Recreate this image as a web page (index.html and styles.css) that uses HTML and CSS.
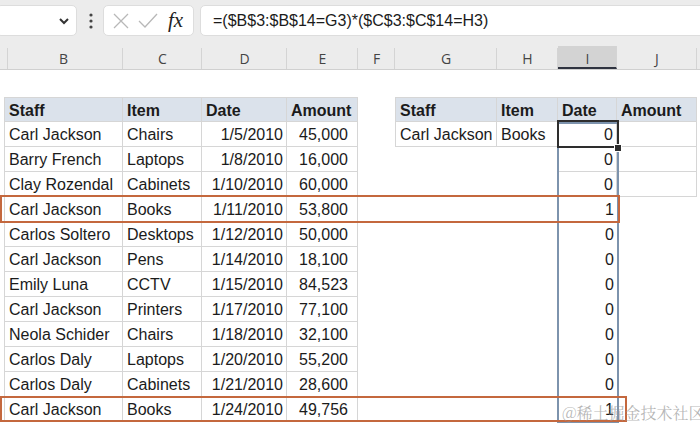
FILE: index.html
```html
<!DOCTYPE html>
<html lang="en">
<head>
    <meta charset="UTF-8" />
    <title>Sheet</title>
    <link rel="stylesheet" href="styles.css">
</head>
<body>
    <div class="app">
        <!-- Formula bar -->
        <div class="toolbar">
            <div class="namebox">
                <svg width="12" height="8" viewBox="0 0 12 8"><polyline points="2,2 6,6 10,2" fill="none" stroke="#333" stroke-width="2"/></svg>
            </div>
            <svg class="grip" width="6" height="20" viewBox="0 0 6 20"><circle cx="3" cy="4" r="1.6"/><circle cx="3" cy="10" r="1.6"/><circle cx="3" cy="16" r="1.6"/></svg>
            <div class="fxbox">
                <svg width="16" height="16" viewBox="0 0 16 16"><path d="M1 1 L15 15 M15 1 L1 15" stroke="#b8b8b8" stroke-width="1.3" fill="none"/></svg>
                <svg width="20" height="16" viewBox="0 0 20 16"><polyline points="1,8 7,14 19,1" stroke="#b8b8b8" stroke-width="1.3" fill="none"/></svg>
                <span class="fx">fx</span>
            </div>
            <div class="formula">=($B$3:$B$14=G3)*($C$3:$C$14=H3)</div>
        </div>

        <!-- Column letters -->
        <div class="row colhead">
            <div></div><div>B</div><div>C</div><div>D</div><div>E</div><div>F</div><div>G</div><div>H</div><div class="sel">I</div><div>J</div><div></div>
        </div>

        <div class="row tall"></div>

        <div class="row">
            <div></div>
            <div class="t hd first top">Staff</div><div class="t hd top">Item</div><div class="t hd top">Date</div><div class="t hd top">Amount</div>
            <div></div>
            <div class="t hd first top">Staff</div><div class="t hd top">Item</div><div class="t hd top">Date</div><div class="t hd top">Amount</div>
            <div></div>
        </div>
        <div class="row">
            <div></div>
            <div class="t first">Carl Jackson</div><div class="t">Chairs</div><div class="t num">1/5/2010</div><div class="t amt">45,000</div>
            <div></div>
            <div class="t first">Carl Jackson</div><div class="t">Books</div><div class="t num">0</div><div class="t"></div>
            <div></div>
        </div>
        <div class="row">
            <div></div>
            <div class="t first">Barry French</div><div class="t">Laptops</div><div class="t num">1/8/2010</div><div class="t amt">16,000</div>
            <div></div><div></div><div></div>
            <div class="t num">0</div><div class="t"></div>
            <div></div>
        </div>
        <div class="row">
            <div></div>
            <div class="t first">Clay Rozendal</div><div class="t">Cabinets</div><div class="t num">1/10/2010</div><div class="t amt">60,000</div>
            <div></div><div></div><div></div>
            <div class="t num">0</div><div class="t"></div>
            <div></div>
        </div>
        <div class="row">
            <div></div>
            <div class="t first">Carl Jackson</div><div class="t">Books</div><div class="t num">1/11/2010</div><div class="t amt">53,800</div>
            <div></div><div></div><div></div>
            <div class="num">1</div><div></div><div></div>
        </div>
        <div class="row">
            <div></div>
            <div class="t first">Carlos Soltero</div><div class="t">Desktops</div><div class="t num">1/12/2010</div><div class="t amt">50,000</div>
            <div></div><div></div><div></div>
            <div class="num">0</div><div></div><div></div>
        </div>
        <div class="row">
            <div></div>
            <div class="t first">Carl Jackson</div><div class="t">Pens</div><div class="t num">1/14/2010</div><div class="t amt">18,100</div>
            <div></div><div></div><div></div>
            <div class="num">0</div><div></div><div></div>
        </div>
        <div class="row">
            <div></div>
            <div class="t first">Emily Luna</div><div class="t">CCTV</div><div class="t num">1/15/2010</div><div class="t amt">84,523</div>
            <div></div><div></div><div></div>
            <div class="num">0</div><div></div><div></div>
        </div>
        <div class="row">
            <div></div>
            <div class="t first">Carl Jackson</div><div class="t">Printers</div><div class="t num">1/17/2010</div><div class="t amt">77,100</div>
            <div></div><div></div><div></div>
            <div class="num">0</div><div></div><div></div>
        </div>
        <div class="row">
            <div></div>
            <div class="t first">Neola Schider</div><div class="t">Chairs</div><div class="t num">1/18/2010</div><div class="t amt">32,100</div>
            <div></div><div></div><div></div>
            <div class="num">0</div><div></div><div></div>
        </div>
        <div class="row">
            <div></div>
            <div class="t first">Carlos Daly</div><div class="t">Laptops</div><div class="t num">1/20/2010</div><div class="t amt">55,200</div>
            <div></div><div></div><div></div>
            <div class="num">0</div><div></div><div></div>
        </div>
        <div class="row">
            <div></div>
            <div class="t first">Carlos Daly</div><div class="t">Cabinets</div><div class="t num">1/21/2010</div><div class="t amt">28,600</div>
            <div></div><div></div><div></div>
            <div class="num">0</div><div></div><div></div>
        </div>
        <div class="row">
            <div></div>
            <div class="t first">Carl Jackson</div><div class="t">Books</div><div class="t num">1/24/2010</div><div class="t amt">49,756</div>
            <div></div><div></div><div></div>
            <div class="num">1</div><div></div><div></div>
        </div>

        <!-- Overlays -->
        <div class="range"></div>
        <div class="active"></div>
        <div class="handle"></div>
        <div class="mark mark-1"></div>
        <div class="mark mark-2"></div>
        <div class="watermark">@稀土掘金技术社区</div>
    </div>
</body>
</html>
```

FILE: styles.css
```css
body {
    margin: 0;
    background-color: #ffffff;
    font-family: "Liberation Sans", Arial, sans-serif;
    color: #1b1b1b;
}

.app {
    position: relative;
    width: 700px;
    height: 430px;
    overflow: hidden;
    --cols: 4px 119px 79px 85px 71px 37px 102px 61px 59px 80px 1fr;
}

/* Formula bar */
.toolbar {
    height: 46px;
    background-color: #ececec;
    display: flex;
    align-items: flex-start;
    padding-top: 5px;
    box-sizing: border-box;
}

.namebox {
    width: 81px;
    height: 31px;
    margin-left: -4px;
    background-color: #ffffff;
    border: 1px solid #dddddd;
    border-radius: 5px;
    box-sizing: border-box;
    display: flex;
    align-items: center;
    justify-content: flex-end;
    padding-right: 6px;
}

.grip {
    fill: #444444;
    margin: 6px 9px 0 11px;
}

.fxbox {
    width: 91px;
    height: 31px;
    background-color: #ffffff;
    border: 1px solid #dddddd;
    border-radius: 5px;
    box-sizing: border-box;
    display: flex;
    align-items: center;
    gap: 9px;
    padding-left: 9px;
}

.fx {
    font-family: "Liberation Serif", serif;
    font-style: italic;
    font-size: 21px;
    color: #222222;
    margin-left: 1px;
}

.formula {
    flex: 1;
    height: 31px;
    margin-left: 6px;
    margin-right: -10px;
    background-color: #ffffff;
    border: 1px solid #dddddd;
    border-radius: 5px;
    box-sizing: border-box;
    padding-left: 12px;
    font-size: 16px;
    line-height: 29px;
}

/* Grid rows */
.row {
    display: grid;
    grid-template-columns: var(--cols);
    height: 25px;
    font-size: 16px;
}

.row > div {
    box-sizing: border-box;
    padding: 0 3px 0 4px;
    line-height: 25px;
    white-space: nowrap;
    overflow: hidden;
}

.row.tall {
    height: 27px;
}

.colhead {
    height: 24px;
    background-color: #ececec;
    border-bottom: 1px solid #d0d0d0;
    box-sizing: border-box;
    font-family: "Open Sans", sans-serif;
    font-size: 14px;
    color: #444444;
}

.colhead > div {
    text-align: center;
    border-right: 1px solid #d4d4d4;
    line-height: 22px;
    margin-top: 2px;
}

.colhead > div.sel {
    background-color: #d3d3d3;
    border-bottom: 2px solid #2f3340;
    margin-top: 0;
    padding-top: 2px;
}

/* Table cells */
.t {
    border-right: 1px solid #d6d6d6;
    border-bottom: 1px solid #d6d6d6;
}

.t.first {
    border-left: 1px solid #d6d6d6;
}

.t.top {
    border-top: 1px solid #d6d6d6;
}

.hd {
    background-color: #dbe2eb;
    font-weight: bold;
}

.row > .num {
    text-align: right;
}

.row > .amt {
    text-align: right;
    padding-right: 9px;
}

/* Overlays */
.range {
    position: absolute;
    left: 557px;
    top: 122px;
    width: 62px;
    height: 301px;
    border: 2px solid #7d93ad;
    box-sizing: border-box;
}

.active {
    position: absolute;
    left: 557px;
    top: 120px;
    width: 62px;
    height: 28px;
    border: 2px solid #2e2e2e;
    box-sizing: border-box;
}

.handle {
    position: absolute;
    left: 614px;
    top: 144px;
    width: 6px;
    height: 6px;
    background-color: #2e2e2e;
    border: 1px solid #ffffff;
}

.mark {
    position: absolute;
    left: 0;
    border: 2px solid #c4683e;
    box-sizing: border-box;
}

.mark-1 {
    top: 195px;
    width: 620px;
    height: 28px;
}

.mark-2 {
    top: 396px;
    width: 627px;
    height: 26px;
}

.watermark {
    position: absolute;
    left: 562px;
    top: 401px;
    white-space: nowrap;
    font-family: "Noto Serif CJK SC", "Noto Sans CJK SC", serif;
    font-size: 16px;
    color: rgba(150, 150, 150, 0.7);
}
```
